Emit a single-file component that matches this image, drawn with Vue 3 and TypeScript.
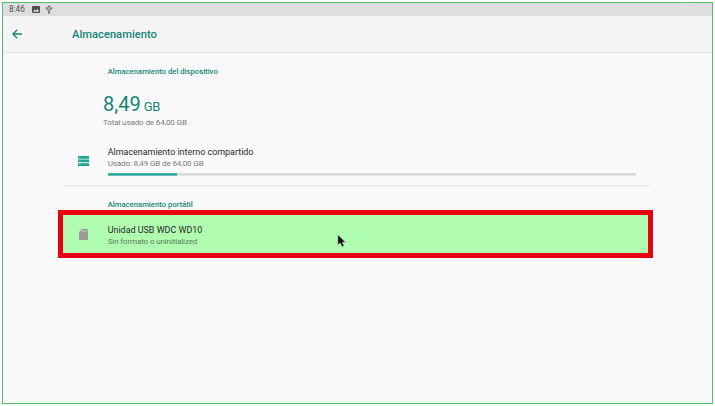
<script setup lang="ts">
interface Volume {
  name: string
  summary: string
}

const used = 8.49
const total = 64
const format = (value: number): string => value.toFixed(2).replace('.', ',')

const internal: Volume = {
  name: 'Almacenamiento interno compartido',
  summary: `Usado: ${format(used)} GB de ${format(total)} GB`,
}
const portable: Volume = {
  name: 'Unidad USB WDC WD10',
  summary: 'Sin formato o uninitialized',
}
</script>

<template>
  <div class="screen">
    <div class="status">
      <span class="clock">8:46</span>
      <svg class="photo" viewBox="0 0 8 7">
        <rect width="8" height="7" rx="0.7" fill="#505050" />
        <path d="M1 5.7 2.7 3.5 3.9 4.8 5.4 2.8 7.1 5.7Z" fill="#dedede" />
      </svg>
      <svg class="usb" viewBox="0 0 8 9" fill="none" stroke="#707070" stroke-width="0.9">
        <path d="M4 1v7M1.7 3.2v1.3L4 6l2.3-1.5V3" />
        <path d="M4 0 5.5 2h-3Z" fill="#666" stroke="none" />
        <circle cx="1.7" cy="3.1" r="1" fill="#666" stroke="none" />
        <path d="M5.4 2.2h1.8V4H5.4Z" fill="#666" stroke="none" />
        <circle cx="4" cy="7.8" r="1" fill="#666" stroke="none" />
      </svg>
      <svg class="wifi" viewBox="0 0 9 8" fill="none" stroke="#ebebeb" stroke-width="0.8">
        <path d="M0.6 2.1Q4.5-0.9 8.4 2.1L4.5 7.2Z" />
      </svg>
    </div>

    <header class="toolbar">
      <svg class="back" viewBox="0 0 10 10" fill="none" stroke="#148577" stroke-width="1.3">
        <path d="M10 5H1M5.2 0.7 0.9 5l4.3 4.3" />
      </svg>
      <h1>Almacenamiento</h1>
    </header>

    <main>
      <h2 class="device-heading">Almacenamiento del dispositivo</h2>
      <div class="amount"><span class="number">{{ format(used) }}</span><span class="unit">GB</span></div>
      <p class="total">Total usado de {{ format(total) }} GB</p>

      <section class="volume">
        <svg class="storage" viewBox="0 0 11 10">
          <path d="M0 0h11v2.7H0ZM0 3.6h11v2.7H0ZM0 7.2h11v2.7H0Z" fill="#1ba394" />
          <path d="M1.2.8h1.2v1.1H1.2ZM1.2 4.4h1.2v1.1H1.2ZM1.2 8h1.2v1.1H1.2Z" fill="#a5dcd5" />
        </svg>
        <div class="details">
          <h3>{{ internal.name }}</h3>
          <p>{{ internal.summary }}</p>
          <div class="meter">
            <svg class="bar" viewBox="0 0 100 3" preserveAspectRatio="none">
              <rect y="0.2" width="100" height="2.4" fill="#d8d8d8" />
              <rect y="0.2" :width="(used / total) * 98.5" height="2.4" fill="#26a69a" />
            </svg>
          </div>
        </div>
      </section>

      <h2 class="portable-heading">Almacenamiento portátil</h2>
      <section class="selected">
        <svg class="card" viewBox="0 0 9 11">
          <path d="M3 0h5q1 0 1 1v9q0 1-1 1H1q-1 0-1-1V3Z" fill="#999c99" />
          <path d="M3.2 1.2v1.8M5.1 1.2v1.8M7 1.2v1.8" stroke="#c4e8c1" stroke-width="0.8" />
        </svg>
        <div class="portable-text">
          <h3>{{ portable.name }}</h3>
          <p>{{ portable.summary }}</p>
        </div>
        <svg class="pointer" viewBox="0 0 9 14">
          <path d="M0.8 0.6v10.6l2.4-2.2 1.7 3.8 2.2-.9-1.7-3.6h3.2Z" fill="#111" stroke="#dce8dc" stroke-width="0.5" />
        </svg>
      </section>
    </main>
  </div>
</template>

<style>
body {
  background: #fff;
}
</style>

<style scoped>
* {
  box-sizing: border-box;
}
.screen {
  display: flex;
  flex-direction: column;
  width: 711px;
  height: 402px;
  margin: 2px;
  border: 1px solid #4dc267;
  background: #fafafa;
  font-family: Roboto, "Liberation Sans", sans-serif;
  overflow: hidden;
}
h1, h2, h3, p {
  margin: 0;
  white-space: nowrap;
}
svg {
  display: block;
  flex: none;
}
.status {
  display: flex;
  align-items: center;
  height: 13px;
  padding: 0 21px 0 6px;
  background: #dedede;
}
.clock {
  width: 22.5px;
  color: #505050;
  font-size: 8.2px;
  line-height: 13px;
}
.photo {
  width: 8px;
  height: 7px;
}
.usb {
  width: 8px;
  height: 9px;
  margin-left: 5.5px;
}
.wifi {
  width: 9px;
  height: 8px;
  margin-left: auto;
}
.toolbar {
  display: flex;
  align-items: center;
  height: 37px;
  padding-left: 9px;
  border-bottom: 1px solid #e2e2e2;
  background: #f4f4f4;
}
.back {
  width: 10px;
  height: 10px;
}
h1 {
  margin-left: 50px;
  padding-top: 2px;
  color: #148577;
  font-size: 11.2px;
  font-weight: 500;
  line-height: 16px;
}
main {
  padding: 13px 62px 0 60px;
}
h2 {
  margin-left: 44.7px;
  color: #148577;
  font-size: 7.7px;
  font-weight: 500;
  line-height: 12px;
}
.amount {
  display: flex;
  align-items: baseline;
  height: 24px;
  margin: 14px 0 0 40px;
  color: #148577;
  line-height: 24px;
}
.number {
  font-size: 20px;
}
.unit {
  margin-left: 3.2px;
  font-size: 13px;
  letter-spacing: -0.4px;
}
.total {
  margin-left: 40px;
}
p {
  color: #7b7b7b;
  font-size: 8.1px;
  letter-spacing: -0.16px;
  line-height: 12px;
}
h3 {
  color: #282828;
  font-size: 8.95px;
  font-weight: 400;
  line-height: 12px;
  margin-bottom: -1px;
}
.volume {
  display: flex;
  height: 40px;
  margin-top: 18px;
  padding: 0 14px 0 15px;
  border-bottom: 1px solid #ececec;
  box-shadow: 0 1px #f1f1f1;
}
.storage {
  width: 11px;
  height: 10px;
  margin: 9.5px 18.7px 0 0;
}
.details {
  flex: 1;
}
.meter {
  height: 3px;
  margin-top: 4px;
}
.bar {
  width: 100%;
  height: 3px;
}
.portable-heading {
  margin-top: 13px;
}
.selected {
  display: flex;
  width: 595px;
  height: 48px;
  margin: -1px 0 0 -5px;
  border: 5px solid #e80010;
  background: #b0fcb0;
}
.card {
  width: 9px;
  height: 11px;
  margin: 14px 0 0 16px;
}
.portable-text {
  width: 231px;
  margin: 9px 0 0 19.7px;
}
.selected p {
  color: #5d805d;
}
.pointer {
  width: 9px;
  height: 14px;
  margin: 19px 0 0 -2px;
}
</style>
